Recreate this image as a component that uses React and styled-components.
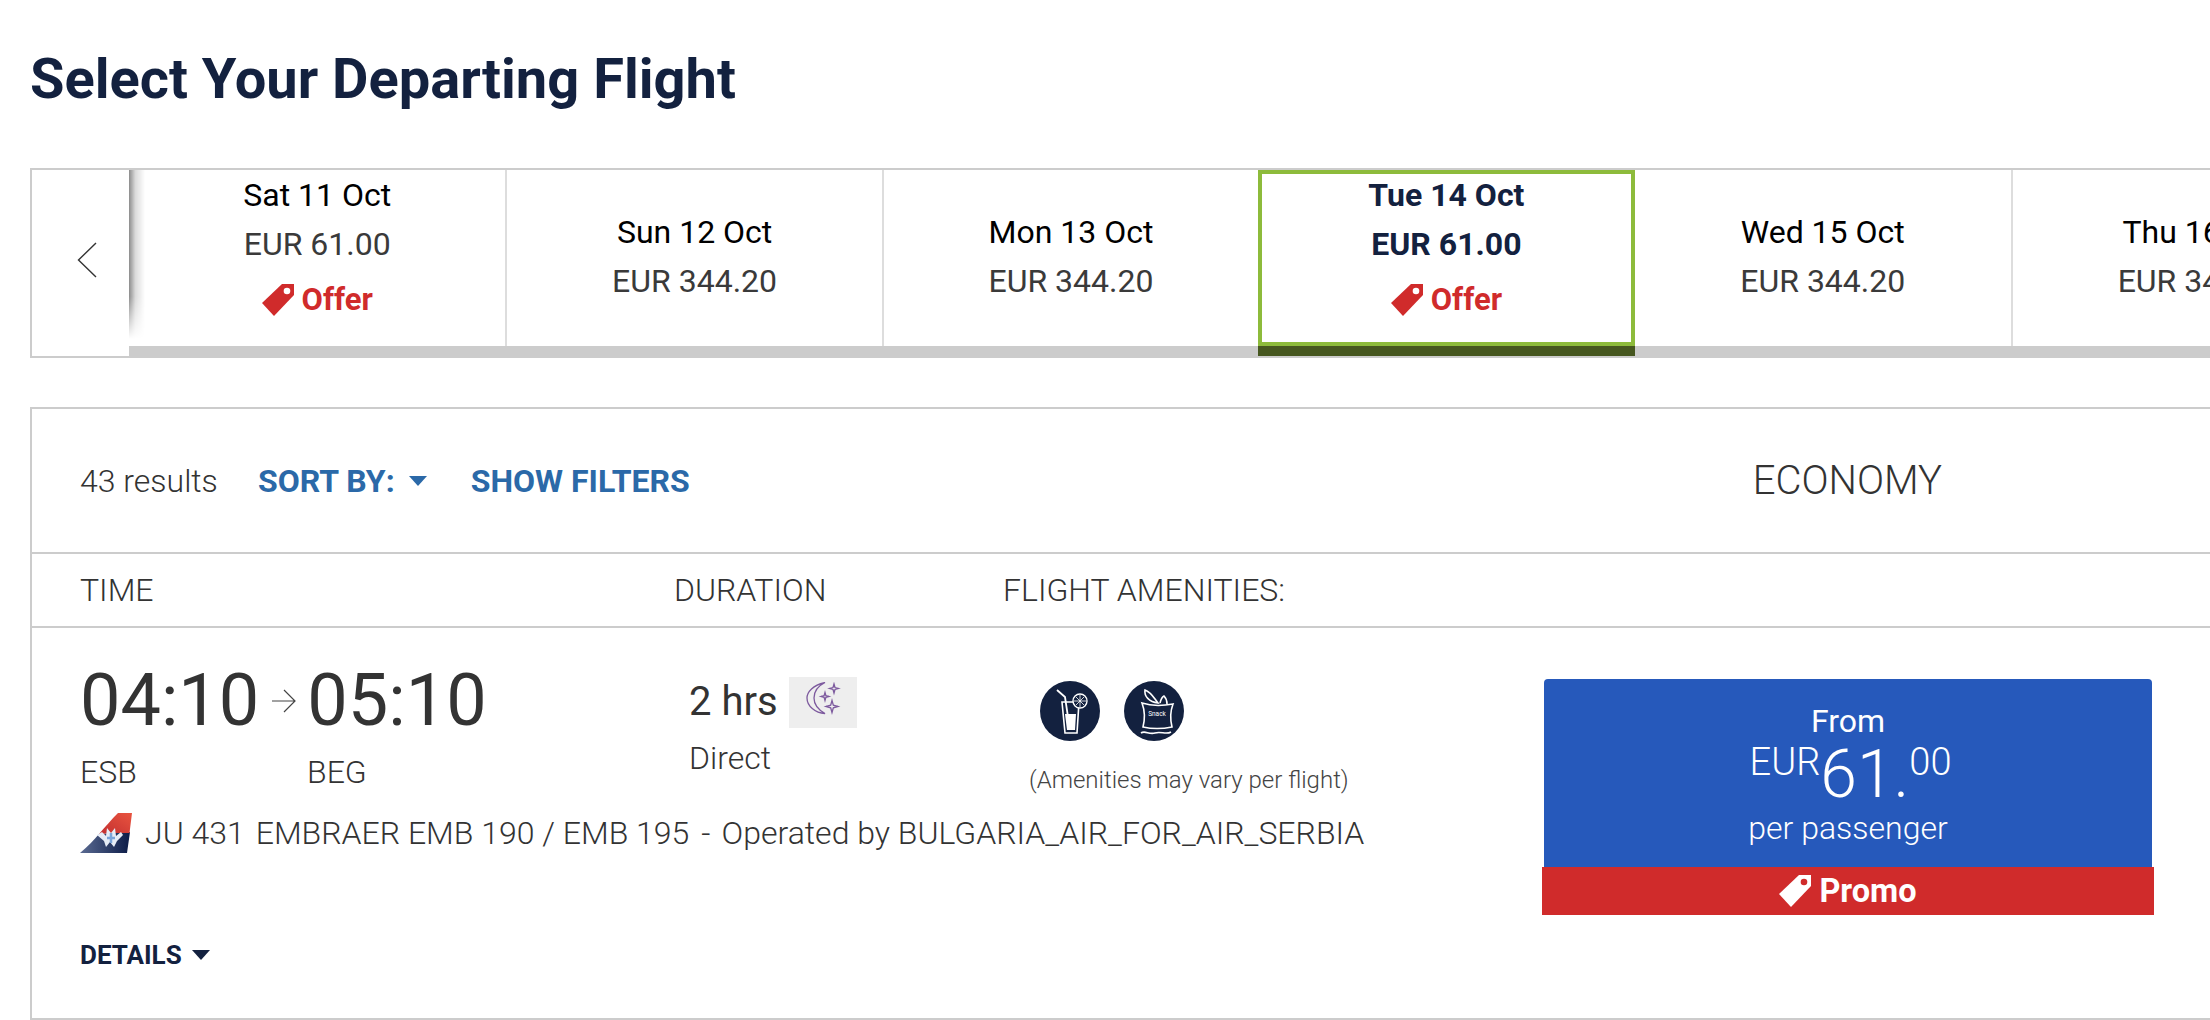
import React from "react";
import styled, { createGlobalStyle } from "styled-components";

const Global = createGlobalStyle`
  html, body { margin: 0; padding: 0; background: #fff; overflow: hidden; }
  body { font-family: Roboto, "Liberation Sans", sans-serif; color: #333; }
  * { box-sizing: border-box; }
`;

const navy = "#13213f";
const red = "#d02b2b";
const line = "#ccc";

const Page = styled.div`
  width: 2210px;
  height: 1020px;
  overflow: hidden;
  padding: 0 0 0 30px;
`;
const Title = styled.h1`
  margin: 0;
  height: 168px;
  padding-top: 43px;
  font-size: 56px;
  line-height: 72px;
  font-weight: 700;
  color: ${navy};
`;
const Strip = styled.div`
  display: flex;
  width: 2300px;
  height: 190px;
  border: solid ${line};
  border-width: 2px 0 2px 2px;
`;
const Prev = styled.button`
  flex: none;
  width: 97px;
  padding: 0 0 6px 12px;
  border: 0;
  background: #fff;
  display: flex;
  align-items: center;
  justify-content: center;
`;
const Day = styled.div`
  flex: none;
  width: 376.4px;
  border-bottom: 10px solid ${(p) => (p.$active ? "#46571f" : line)};
`;
const DayBody = styled.div`
  position: relative;
  height: 176px;
  display: flex;
  flex-direction: column;
  align-items: center;
  justify-content: ${(p) => (p.$offer ? "flex-start" : "center")};
  padding-top: ${(p) => (p.$offer ? (p.$active ? "2px" : "6px") : "0")};
  padding-bottom: ${(p) => (p.$offer ? "0" : "4px")};
  border: ${(p) => (p.$active ? "4px solid #8dbb3b" : "0")};
  border-left: ${(p) => (p.$active ? "4px solid #8dbb3b" : p.$divided ? "2px solid #ddd" : "0")};
`;
const EdgeShadow = styled.span`
  position: absolute;
  left: 0;
  top: 0;
  width: 16px;
  height: 100%;
  background: linear-gradient(90deg, rgba(0, 0, 0, 0.45), rgba(0, 0, 0, 0.14) 40%, rgba(0, 0, 0, 0));
  mask-image: linear-gradient(#000 72%, transparent 96%);
`;
const DayDate = styled.div`
  font-size: 32px;
  line-height: 38px;
  font-weight: ${(p) => (p.$active ? 700 : 400)};
  color: ${(p) => (p.$active ? navy : "#000")};
  white-space: nowrap;
`;
const DayPrice = styled.div`
  margin-top: 11px;
  font-size: 32px;
  line-height: 38px;
  font-weight: ${(p) => (p.$active ? 700 : 400)};
  color: ${(p) => (p.$active ? navy : "#3a3a3a")};
  white-space: nowrap;
`;
const Offer = styled.div`
  margin-top: 18px;
  display: flex;
  align-items: center;
  gap: 8px;
  font-size: 31px;
  line-height: 38px;
  font-weight: 700;
  color: ${red};
`;
const Panel = styled.section`
  margin-top: 49px;
  width: 2300px;
  height: 613px;
  border: 2px solid ${line};
  border-right: 0;
`;
const Toolbar = styled.div`
  height: 145px;
  display: flex;
  align-items: center;
  padding-left: 48px;
  border-bottom: 2px solid ${line};
`;
const Results = styled.span`
  width: 178px;
  font-size: 32px;
  font-weight: 300;
`;
const ToolLink = styled.span`
  display: flex;
  align-items: center;
  gap: 14px;
  margin-right: ${(p) => p.$gap || 0}px;
  font-size: 32px;
  font-weight: 700;
  color: #2b69a8;
`;
const Economy = styled.span`
  margin-left: 1063px;
  font-size: 40px;
  font-weight: 300;
  color: #333;
`;
const Heads = styled.div`
  height: 74px;
  display: flex;
  align-items: center;
  padding-left: 48px;
  border-bottom: 2px solid ${line};
  font-size: 32px;
  font-weight: 300;
`;
const Head = styled.span`
  width: ${(p) => p.$w}px;
`;
const Row = styled.div`
  display: grid;
  grid-template-columns: 1463px 611px;
  padding-left: 48px;
`;
const Info = styled.div`
  display: flex;
  flex-direction: column;
`;
const Top = styled.div`
  display: flex;
  height: 185px;
`;
const Journey = styled.div`
  width: 609px;
  padding-top: 31px;
`;
const Times = styled.div`
  display: flex;
  align-items: center;
  font-size: 72px;
  line-height: 84px;
  color: #333;
`;
const Arrow = styled.svg`
  margin: 0 11px 0 13px;
`;
const Codes = styled.div`
  display: flex;
  margin-top: 10px;
  font-size: 32px;
  line-height: 38px;
  font-weight: 300;
`;
const Code = styled.span`
  width: 227px;
`;
const Duration = styled.div`
  width: 300px;
  padding-top: 48px;
`;
const Hours = styled.div`
  display: flex;
  align-items: center;
  gap: 11px;
  font-size: 40px;
  line-height: 52px;
`;
const Night = styled.span`
  width: 68px;
  height: 51px;
  background: #eee;
  display: flex;
  align-items: center;
  justify-content: center;
`;
const Stops = styled.div`
  margin-top: 11px;
  font-size: 32px;
  line-height: 38px;
  font-weight: 300;
`;
const Amenities = styled.div`
  padding-top: 53px;
  margin-left: 40px;
`;
const Icons = styled.div`
  display: flex;
  gap: 24px;
  padding-left: 11px;
`;
const Note = styled.div`
  margin-top: 20px;
  font-size: 24px;
  line-height: 38px;
  font-weight: 300;
  color: #444;
  white-space: nowrap;
`;
const FlightLine = styled.div`
  display: flex;
  align-items: center;
  height: 40px;
  font-size: 32px;
  font-weight: 300;
  white-space: nowrap;
`;
const Tail = styled.svg`
  margin: 0 13px 0 0;
`;
const Sep = styled.span`
  margin-left: ${(p) => p.$m}px;
`;
const Details = styled.div`
  display: flex;
  align-items: center;
  gap: 10px;
  margin-top: 87px;
  font-size: 26px;
  line-height: 30px;
  font-weight: 700;
  color: ${navy};
`;
const PriceCol = styled.div`
  padding-top: 51px;
  margin-left: -1px;
`;
const PriceBox = styled.div`
  margin: 0 2px;
  height: 188px;
  border-radius: 4px 4px 0 0;
  background: #2659bb;
  color: #fff;
  display: flex;
  flex-direction: column;
  align-items: center;
  padding-top: 24px;
`;
const From = styled.div`
  font-size: 32px;
  line-height: 36px;
`;
const Amount = styled.div`
  display: flex;
  align-items: flex-start;
  height: 64px;
  padding-left: 5px;
  font-weight: 300;
  font-size: 38px;
  line-height: 46px;
`;
const Whole = styled.span`
  font-size: 66px;
  line-height: 66px;
  font-weight: 300;
  margin-top: 3px;
`;
const PerPax = styled.div`
  margin-top: 5px;
  font-size: 32px;
  line-height: 40px;
  font-weight: 300;
`;
const Promo = styled.div`
  height: 48px;
  background: ${red};
  color: #fff;
  display: flex;
  align-items: center;
  justify-content: center;
  gap: 8px;
  font-size: 32.500px;
  font-weight: 700;
`;

const Tag = ({ fill, hole }) => (
  <svg width="32" height="32" viewBox="0 0 32 32">
    <path d="M20 0 H32 V11 L12 32 L0 19 Z" fill={fill} />
    <circle cx="25" cy="7" r="3.3" fill={hole} />
  </svg>
);
const Caret = ({ color }) => (
  <svg width="18" height="10" viewBox="0 0 18 10">
    <path d="M0 0 H18 L9 10 Z" fill={color} />
  </svg>
);
const star = (cx, cy, r) => {
  const k = r * 0.22;
  return `M${cx} ${cy - r} L${cx + k} ${cy - k} L${cx + r} ${cy} L${cx + k} ${cy + k} L${cx} ${cy + r} L${cx - k} ${cy + k} L${cx - r} ${cy} L${cx - k} ${cy - k} Z`;
};

const days = [
  { d: "Sat 11 Oct", p: "EUR 61.00", offer: true, first: true },
  { d: "Sun 12 Oct", p: "EUR 344.20", divided: true },
  { d: "Mon 13 Oct", p: "EUR 344.20", divided: true },
  { d: "Tue 14 Oct", p: "EUR 61.00", offer: true, active: true },
  { d: "Wed 15 Oct", p: "EUR 344.20" },
  { d: "Thu 16 Oct", p: "EUR 344.20", divided: true },
];

export default function App() {
  return (
    <Page>
      <Global />
      <Title>Select Your Departing Flight</Title>
      <Strip>
        <Prev aria-label="Previous">
          <svg width="20" height="36" viewBox="0 0 20 36">
            <path d="M19 1 L1.500 18 L19 35" fill="none" stroke="#333" strokeWidth="1.4" />
          </svg>
        </Prev>
        {days.map((x) => (
          <Day key={x.d} $active={x.active}>
            <DayBody $active={x.active} $offer={x.offer} $divided={x.divided}>
              {x.first && <EdgeShadow />}
              <DayDate $active={x.active}>{x.d}</DayDate>
              <DayPrice $active={x.active}>{x.p}</DayPrice>
              {x.offer && (
                <Offer>
                  <Tag fill={red} hole="#fff" />
                  Offer
                </Offer>
              )}
            </DayBody>
          </Day>
        ))}
      </Strip>
      <Panel>
        <Toolbar>
          <Results>43 results</Results>
          <ToolLink $gap={44}>
            SORT BY: <Caret color="#2b69a8" />
          </ToolLink>
          <ToolLink>SHOW FILTERS</ToolLink>
          <Economy>ECONOMY</Economy>
        </Toolbar>
        <Heads>
          <Head $w={594}>TIME</Head>
          <Head $w={329}>DURATION</Head>
          <Head $w={400}>FLIGHT AMENITIES:</Head>
        </Heads>
        <Row>
          <Info>
            <Top>
              <Journey>
                <Times>
                  04:10
                  <Arrow width="24" height="24" viewBox="0 0 24 24">
                    <path d="M0 12 H23 M12 1 L23 12 L12 23" fill="none" stroke="#444" strokeWidth="1.2" />
                  </Arrow>
                  05:10
                </Times>
                <Codes>
                  <Code>ESB</Code>
                  <Code>BEG</Code>
                </Codes>
              </Journey>
              <Duration>
                <Hours>
                  2 hrs
                  <Night>
                    <svg width="40" height="40" viewBox="0 0 40 40" fill="none" stroke="#7d5a9e" strokeWidth="1.3">
                      <path d="M22 .5 C10 3 4 10 4 16 C4 24 12 31 22 31.500 C14 27 11 22 11 16 C11 9 15 4 22 .5 Z" />
                      <path d={star(31, 6.5, 4.5)} />
                      <path d={star(22, 14.5, 4)} />
                      <path d={star(29, 24.5, 6)} />
                    </svg>
                  </Night>
                </Hours>
                <Stops>Direct</Stops>
              </Duration>
              <Amenities>
                <Icons>
                  <svg width="60" height="60" viewBox="0 0 60 60">
                    <circle cx="30" cy="30" r="30" fill={navy} />
                    <path d="M22 21 H39 L37 52 H25 Z" fill="none" stroke="#fff" strokeWidth="1.6" />
                    <path d="M25 33 H36 L35 49 H27 Z" fill="#fff" />
                    <path d="M17 9 L25 16 L28 36" fill="none" stroke="#fff" strokeWidth="1.8" />
                    <circle cx="40" cy="20" r="7" fill={navy} stroke="#fff" strokeWidth="1.4" />
                    <path d="M40 14 V26 M34 20 H46 M36 16 L44 24 M44 16 L36 24" stroke="#fff" strokeWidth=".8" />
                  </svg>
                  <svg width="60" height="60" viewBox="0 0 60 60">
                    <circle cx="30" cy="30" r="30" fill={navy} />
                    <path d="M21 9 C20 15 25 21 34 22 C30 17 27 11 21 9 Z" fill="none" stroke="#fff" strokeWidth="1.6" />
                    <path d="M36 22 C37 18 38 16 40 15 C42 17 43 20 43 23" fill="none" stroke="#fff" strokeWidth="1.6" />
                    <path d="M18 22 C27 25 38 25 49 23 C46 31 46 38 48 46 C38 48 28 48 19 46 C21 38 21 30 18 22 Z" fill="none" stroke="#fff" strokeWidth="1.6" />
                    <path d="M17 52 C21 49 25 54 31 52 C37 50 42 54 47 51" fill="none" stroke="#fff" strokeWidth="1.6" />
                    <text x="33" y="35" fontSize="6.500" fill="#fff" textAnchor="middle" fontFamily="Roboto">Snack</text>
                  </svg>
                </Icons>
                <Note>(Amenities may vary per flight)</Note>
              </Amenities>
            </Top>
            <FlightLine>
              <Tail width="52" height="40" viewBox="0 0 52 40">
                <defs>
                  <linearGradient id="tailRed" x1="0" y1="1" x2="1" y2="0">
                    <stop offset="0" stopColor="#c22f30" />
                    <stop offset="1" stopColor="#e9543f" />
                  </linearGradient>
                  <linearGradient id="tailBlue" x1="0" y1="0" x2="1" y2="0">
                    <stop offset="0" stopColor="#5b6b92" />
                    <stop offset="1" stopColor="#0c1c48" />
                  </linearGradient>
                </defs>
                <path d="M0 40 C8 33 14 27 19 21 L50 19 L47 40 Z" fill="url(#tailBlue)" />
                <path d="M19 21 C26 13 31 7 38 0 H52 L49.500 20 L35 20 Z" fill="url(#tailRed)" />
                <path d="M17 22 L22 19 L26 23 L27 15 L31 20 L35 15 L36 23 L41 19 L43 22 L37 28 L34 34 L30 29 L26 34 L24 28 Z" fill="#e6ecf6" />
                <path d="M31 20 V30 M27 25 H35" stroke="#7aa5da" strokeWidth="2.5" />
              </Tail>
              JU 431
              <Sep $m={11}>EMBRAER EMB 190 / EMB 195</Sep>
              <Sep $m={12}>-</Sep>
              <Sep $m={11}>Operated by BULGARIA_AIR_FOR_AIR_SERBIA</Sep>
            </FlightLine>
            <Details>
              DETAILS <Caret color={navy} />
            </Details>
          </Info>
          <PriceCol>
            <PriceBox>
              <From>From</From>
              <Amount>
                EUR<Whole>61.</Whole>00
              </Amount>
              <PerPax>per passenger</PerPax>
            </PriceBox>
            <Promo>
              <Tag fill="#fff" hole={red} />
              Promo
            </Promo>
          </PriceCol>
        </Row>
      </Panel>
    </Page>
  );
}
